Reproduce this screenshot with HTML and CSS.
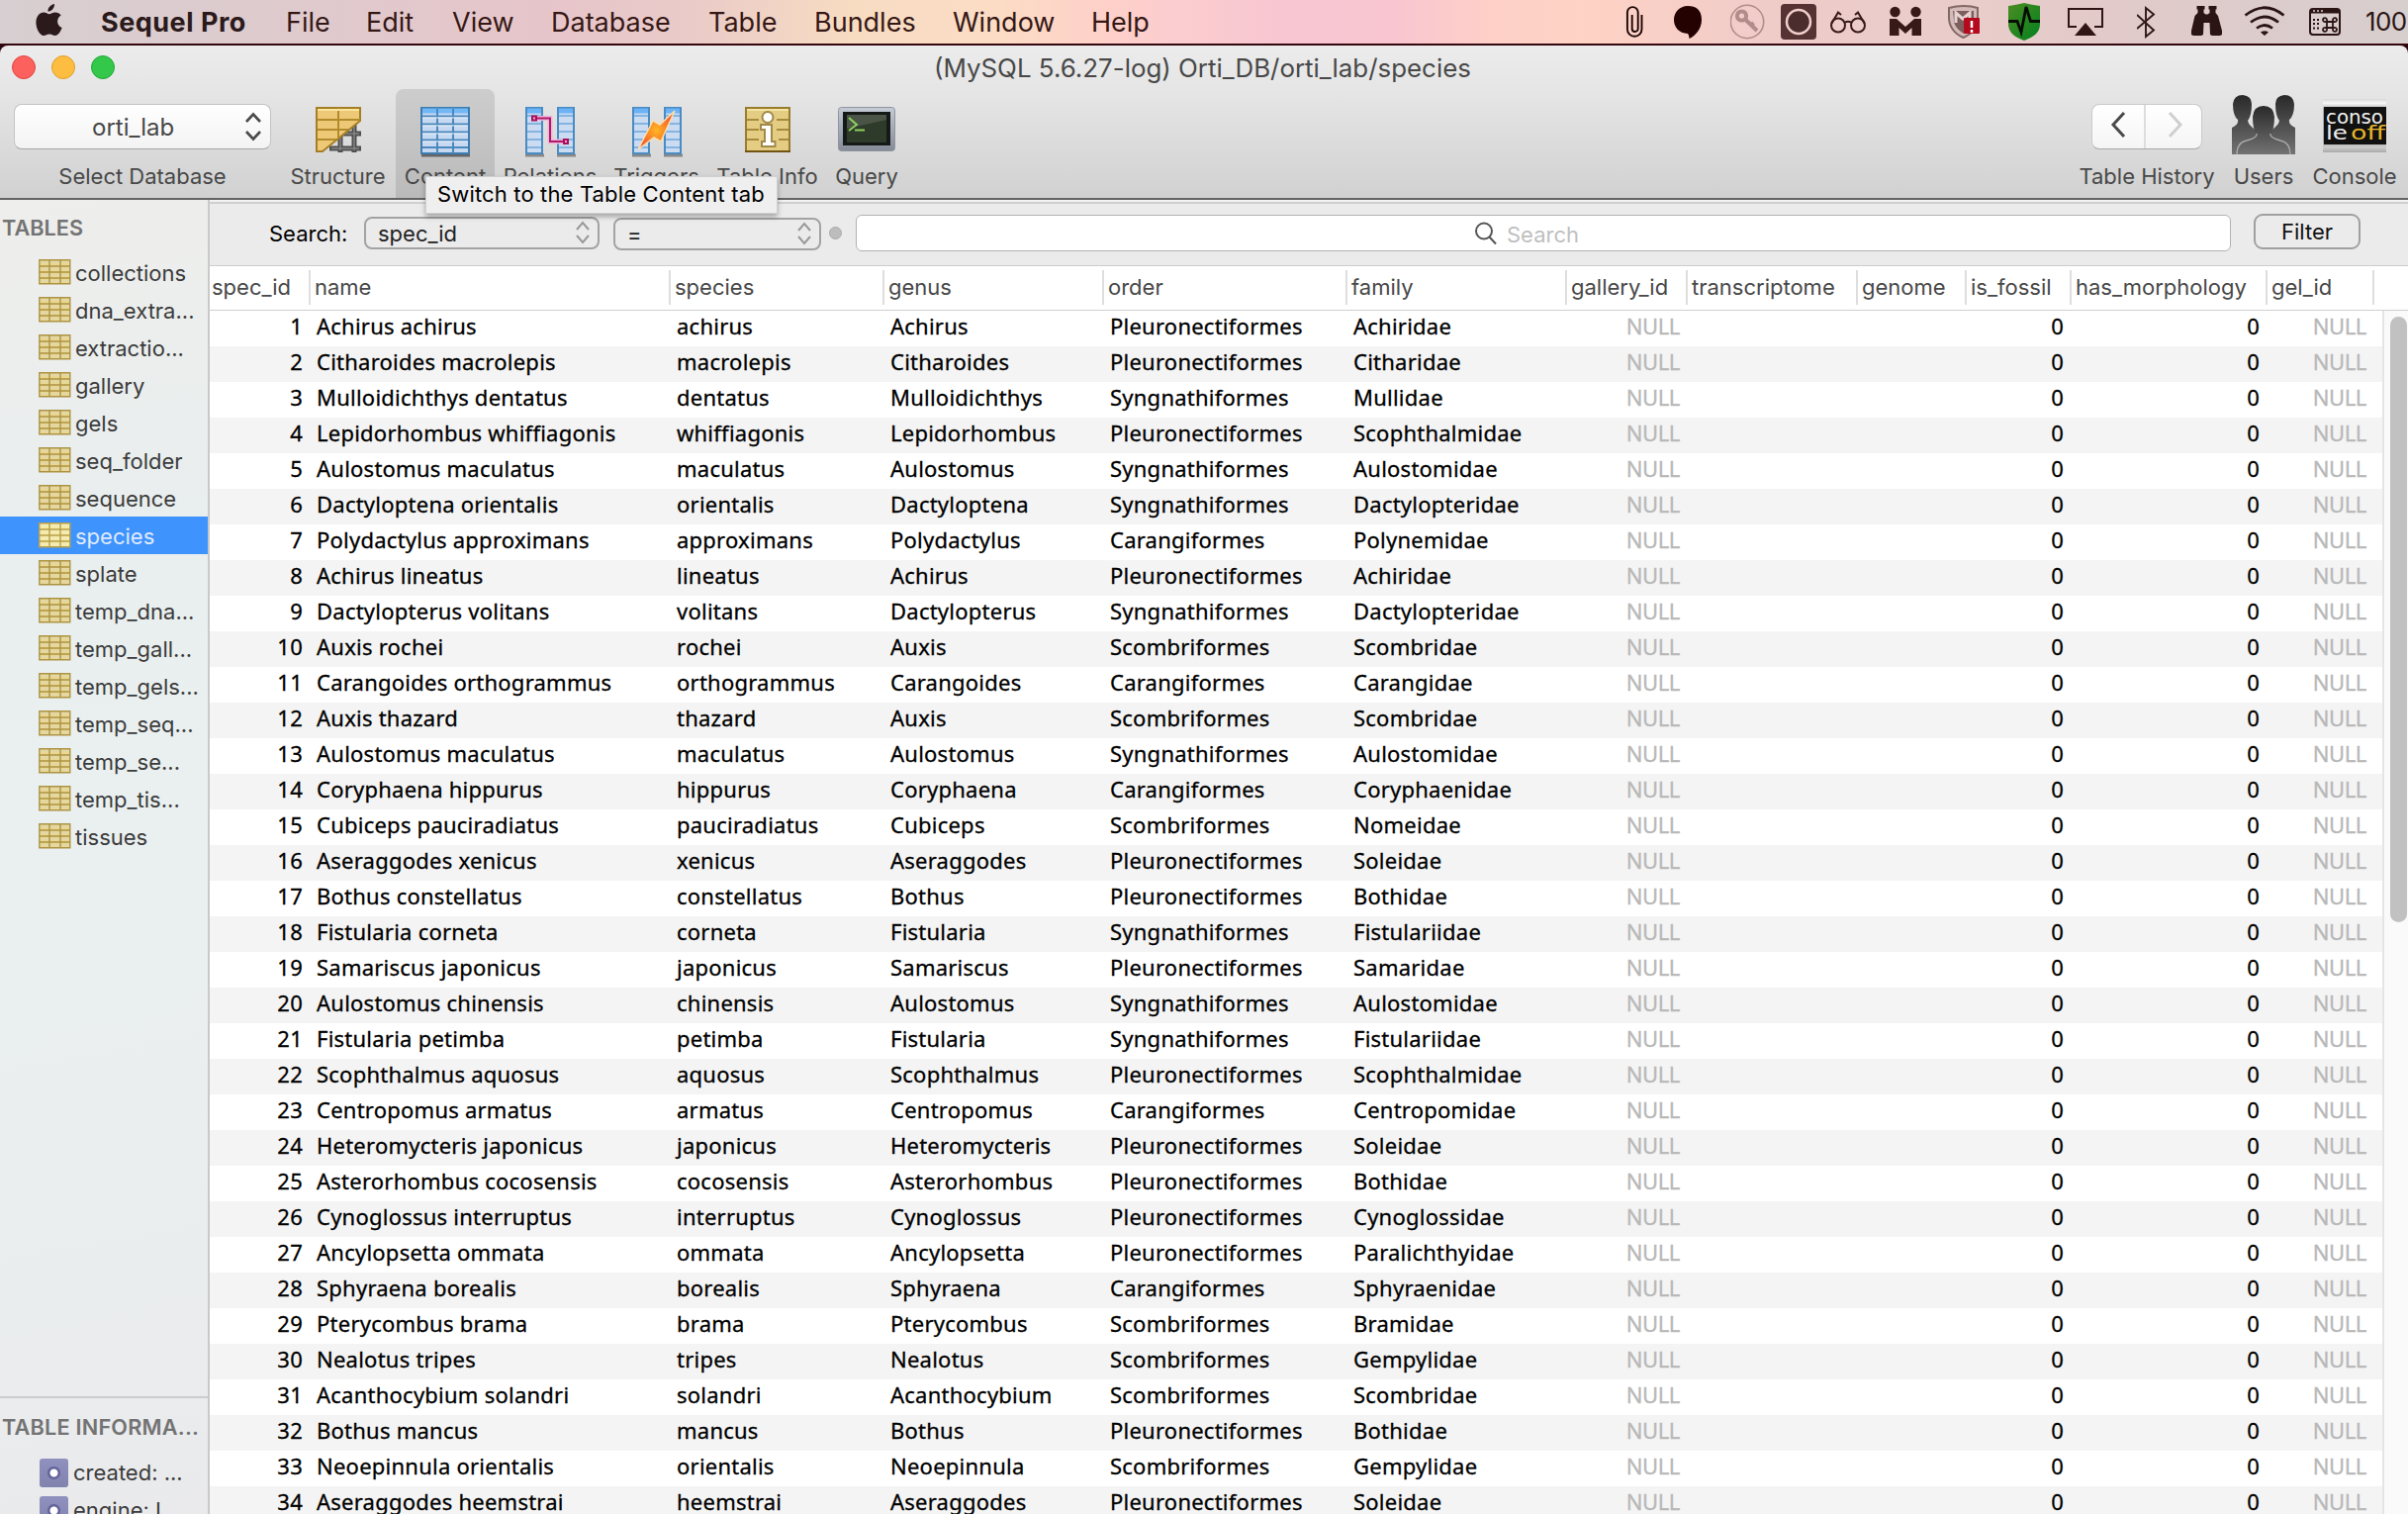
FILE: index.html
```html
<!DOCTYPE html>
<html lang="en">
<head>
<meta charset="utf-8">
<title>Sequel Pro</title>
<link rel="stylesheet" href="styles.css">
</head>
<body>
<header class="menubar">
  <svg class="apple" width="28" height="34" viewBox="0 0 28 34"><path d="M19 0c.4 3.6-2.800 7.600-6.500 7.600C12 4.200 15.300.600 19 0zM13.600 10.300c1.400 0 3.200-1.900 6.200-1.900 2.500 0 4.600 1.200 5.900 3.100-5.200 3.200-4.500 10.300.9 12.500C25.400 27.700 22.600 32 19.700 32c-2.300 0-3-1.400-5.700-1.400S10.300 32 8.200 32C4.300 32 .400 25 .400 18.800c0-6.400 3.800-10.200 7.700-10.200 2.500 0 4.200 1.700 5.500 1.700z"/></svg>
  <nav class="menus">
    <b>Sequel Pro</b><span>File</span><span>Edit</span><span>View</span><span>Database</span><span>Table</span><span>Bundles</span><span>Window</span><span>Help</span>
  </nav>
  <div class="tray">
    <svg width="20" height="44" viewBox="0 0 20 44" fill="none" stroke="#1c0605" stroke-width="1.900"><path d="M16.500 15v14.500a7.300 7.300 0 0 1-14.600 0V12.500a5.400 5.400 0 0 1 10.800 0V29a3 3 0 0 1-6 0V15"/></svg>
    <svg width="30" height="44" viewBox="0 0 30 44"><path fill="#250202" d="M14 6C5.500 6 0 12.500 0 20s5 13.500 14 14c1 1 1.500 3 1.400 5C21 36.500 28 30 28 20S22.500 6 14 6z"/></svg>
    <svg width="36" height="44" viewBox="0 0 36 44" fill="none" stroke="#b08c8a"><circle cx="17" cy="22" r="16.700" stroke-width="1.600"/><circle cx="11.500" cy="16" r="4.600" stroke-width="4"/><path stroke-width="4" d="M15 19.500L27 31M20.500 26l3-3"/></svg>
    <svg width="36" height="44" viewBox="0 0 36 44"><rect y="4" width="36" height="36" rx="4" fill="#553334"/><circle cx="18" cy="22" r="12" fill="#4b2d2e" stroke="#f0cecb" stroke-width="2.500"/></svg>
    <svg width="36" height="44" viewBox="0 0 36 44" fill="none" stroke="#3a1a19" stroke-width="2"><circle cx="8" cy="25.500" r="7"/><circle cx="28" cy="25.500" r="7"/><path d="M14.500 23q3.500-2.500 7 0M1.200 24L8 12.500l3 2.500M34.800 24L28 12.500 25 15"/></svg>
    <svg width="32" height="44" viewBox="0 0 32 44" fill="#371918"><circle cx="5.500" cy="12" r="5.200"/><circle cx="26.500" cy="12" r="5.200"/><path d="M0 36V19h7l9 8 9-8h7v17h-9.500v-8L16 34l-6.500-6v8z"/></svg>
    <svg width="34" height="44" viewBox="0 0 34 44"><path d="M1 8q7-2 15-2t14 2v11c0 9-6 15-14.500 19C6 34 1 26 1 18z" fill="#d4bab9" stroke="#836866" stroke-width="2"/><path d="M5 11h21v11c-1 6-5 9-10 12-6-4-10-8-10-14z" fill="#7d5f5e"/><path d="M8 23V13l7 6 7-6v8" fill="none" stroke="#e7d4d2" stroke-width="3"/><rect x="16" y="18" width="16" height="16" rx="1" fill="#b5091d"/><path d="M24 21v7m0 2v3" stroke="#fff" stroke-width="2.500"/></svg>
    <svg width="32" height="44" viewBox="0 0 32 44"><defs><linearGradient id="green" x2="1" y2="1"><stop stop-color="#4c8c22"/><stop offset="1" stop-color="#02811f"/></linearGradient></defs><path d="M0 6q8-1 16-3 8 2 16 3v18c0 9-6 13-16 17C6 37 0 33 0 24z" fill="url(#green)"/><path d="M0 21.500h9l4 11L18 7l4.500 14.500H32" fill="none" stroke="#080d05" stroke-width="2.800"/></svg>
    <svg width="36" height="44" viewBox="0 0 36 44"><path d="M9 27H1V9h34v18h-8" fill="none" stroke="#301716" stroke-width="2"/><path d="M18 23l11 13H7z" fill="#301716"/></svg>
    <svg width="20" height="44" viewBox="0 0 20 44"><path d="M0 15l17 15.500L9 37V8l8 6.500L0 29" fill="none" stroke="#301716" stroke-width="1.900"/></svg>
    <svg width="31" height="44" viewBox="0 0 31 44" fill="#2b1514"><path d="M5.500 6h8v3.500h-1V13l2 1.500h2l2-1.500V9.500h-1V6h8v3.500h-1V13l2.500 3L31 31v4l-2 1h-8l-2-1-.5-12h-6L12 35l-2 1H2l-2-1v-4l3.500-15L6.500 13V9.500h-1z"/></svg>
    <svg width="42" height="44" viewBox="0 0 42 44" fill="none" stroke="#2b1514" stroke-width="2.700"><path d="M1.500 15.500q19.500-15.500 39 0M7 22.500q14-11 28 0M13 28.500q8-6 16 0"/><path d="M21 36l-4-3.500q4-2.500 8 0z" fill="#2b1514" stroke="none"/></svg>
    <svg width="32" height="44" viewBox="0 0 32 44" fill="none" stroke="#2b1514" stroke-width="2"><rect x="1" y="9" width="30" height="26" rx="3"/><path d="M1 11.500h30" stroke-width="4"/><path d="M4 20h2m2 0h2M4 24h2m2 0h2M4 28.500h2m2 0h2"/><path stroke-width="1.800" d="M18 22h6v6h-6zM18 22h-1.500a2 2 0 1 1 1.500-2zM24 22h1.500a2 2 0 1 0-1.500-2zM18 28h-1.500a2 2 0 1 0 1.500 2zM24 28h1.500a2 2 0 1 1-1.500 2z"/><path d="M4 11h2m2 0h2m2 0h2" stroke="#dccaca" stroke-width="1.500"/></svg>
    <span class="battery">100%</span>
  </div>
</header>
<main class="window">
  <div class="chrome">
    <div class="titlebar">
      <div class="lights"><i class="red"></i><i class="yellow"></i><i class="green"></i></div>
      <h1>(MySQL 5.6.27-log) Orti_DB/orti_lab/species</h1>
    </div>
    <div class="toolbar">
      <div class="tool database"><div class="art"><div class="dbselect"><span>orti_lab</span><svg width="18" height="30" viewBox="0 0 18 30" fill="none" stroke="#4a4a4a" stroke-width="2.600"><path d="M2 10l7-7.500 7 7.500M2 20l7 7.500 7-7.500"/></svg></div></div><label>Select Database</label></div>
      <div class="tool structure"><div class="art"><svg width="46" height="52" viewBox="0 0 46 52"><g stroke="#4f4f4f" stroke-width="5"><path d="M14 42h32M26 27h20M25 46V26M39 46V14"/></g><g stroke="#858585" stroke-width="1.500"><path d="M16 42h28M28 27h16M25 44V30M39 44V20"/></g><path d="M1 1h44v13L7 45H1z" fill="#edc977" stroke="#a67f25" stroke-width="2"/><path d="M2 13h43M2 23h31M2 33h19M23 1v31" stroke="#b38a2b" stroke-width="2"/><path d="M2 3h42" stroke="#f8e69e" stroke-width="2"/></svg></div><label>Structure</label></div>
      <div class="tool content active"><div class="art"><svg width="52" height="52" viewBox="0 0 52 52"><path d="M2 49h49" stroke="#666" stroke-width="3"/><path d="M2 1h48v46H2z" fill="#c7d9f1" stroke="#3c7db1" stroke-width="2"/><path d="M3 4h46" stroke="#72b7f6" stroke-width="5"/><path d="M3 9.500h46M3 17.500h46M3 25.500h46M3 33.500h46M3 41h46M18 2v45M34 2v45" stroke="#4b88bd" stroke-width="2"/><path d="M3 11h46M3 19h46M3 27h46M3 35h46" stroke="#edf3fb"/></svg></div><label>Content</label></div>
      <div class="tool relations"><div class="art"><svg width="52" height="52" viewBox="0 0 52 52"><path d="M1 49h19M33 49h19" stroke="#888" stroke-width="3"/><path d="M2 1h16v46H2zM34 1h16v46H34z" fill="#cbdbf1" stroke="#498bc2" stroke-width="2"/><path d="M3 4h14M35 4h14" stroke="#6bb2f7" stroke-width="5"/><path d="M3 9h14M3 17h14M3 25h14M3 33h14M3 41h14M35 9h14M35 17h14M35 25h14M35 33h14M35 41h14" stroke="#84b4df" stroke-width="2"/><path d="M10 11.500h16V35h14" fill="none" stroke="#efb6da" stroke-width="5"/><path d="M10 11.500h16V35h14" fill="none" stroke="#b0196a" stroke-width="2"/><path d="M8 9.500h4v4H8zM40 33h4v4h-4z" fill="#f3a8d2" stroke="#a80f5d" stroke-width="2"/></svg></div><label>Relations</label></div>
      <div class="tool triggers"><div class="art"><svg width="52" height="52" viewBox="0 0 52 52"><path d="M1 49h19M33 49h19" stroke="#888" stroke-width="3"/><path d="M2 1h16v46H2zM34 1h16v46H34z" fill="#cbdbf1" stroke="#498bc2" stroke-width="2"/><path d="M3 4h14M35 4h14" stroke="#6bb2f7" stroke-width="5"/><path d="M3 9h14M3 17h14M3 25h14M3 33h14M3 41h14M35 9h14M35 17h14M35 25h14M35 33h14M35 41h14" stroke="#84b4df" stroke-width="2"/><defs><radialGradient id="bolt"><stop stop-color="#ffb723"/><stop offset="1" stop-color="#f8562b"/></radialGradient></defs><path d="M44 4L30 35l-7-4L7 43 22 14l7 4z" fill="url(#bolt)" stroke="#f8dfad" stroke-width="1.500"/></svg></div><label>Triggers</label></div>
      <div class="tool info"><div class="art"><svg width="46" height="52" viewBox="0 0 46 52"><path d="M1 1h44v44H1z" fill="#e5cc83" stroke="#987d2e" stroke-width="2"/><path d="M0 45h46" stroke="#705512" stroke-width="2"/><path d="M2 3h42" stroke="#f4e5a5" stroke-width="2"/><path d="M2 13h12M32 13h12M2 23h12M32 23h12M2 33h12M34 33h10" stroke="#a68b3c" stroke-width="2"/><g fill="#fff" stroke="#a18a49" stroke-width="2"><circle cx="23" cy="10.500" r="5.500"/><path d="M16 18h11v17h3.500v5H17v-5h3V23h-4z"/></g></svg></div><label>Table Info</label></div>
      <div class="tool query"><div class="art"><svg width="58" height="52" viewBox="0 0 58 52"><defs><linearGradient id="frame" x2="0" y2="1"><stop stop-color="#c5cbd5"/><stop offset="1" stop-color="#858b97"/></linearGradient></defs><rect x=".5" y=".5" width="57" height="44" rx="3" fill="url(#frame)" stroke="#8f949e"/><path d="M5 5h48v34H5z" fill="#151a17"/><path d="M9 8h40v28H9z" fill="#2f3b2a"/><path d="M9 8h40v5L9 22z" fill="#4b5547"/><path d="M11 11l8 7-8 6M17 23.500h10" fill="none" stroke="#8ed05c" stroke-width="2"/></svg></div><label>Query</label></div>
      <div class="tool history"><div class="art"><div class="navpair"><span><svg width="16" height="28" viewBox="0 0 16 28" fill="none" stroke="#4a4a4a" stroke-width="3"><path d="M14 2L3 14l11 12"/></svg></span><span><svg width="16" height="28" viewBox="0 0 16 28" fill="none" stroke="#cfcfcf" stroke-width="3"><path d="M2 2l11 12L2 26"/></svg></span></div></div><label>Table History</label></div>
      <div class="tool users"><div class="art"><svg width="64" height="60" viewBox="0 0 64 60"><defs><linearGradient id="person" x2="0" y2="1"><stop stop-color="#292929"/><stop offset="1" stop-color="#737373"/></linearGradient></defs><g fill="url(#person)"><path d="M0 60V33q7-3 6-8-5-4-5-16Q2 0 11 0q9 1 9 9 0 12-4 17 1 5 9 10v24zM64 60V33q-7-3-6-8 5-4 5-16Q62 0 53 0q-9 1-9 9 0 12 4 17-1 5-9 10v24z"/></g><path d="M5 60q0-12 10-14 10-3 10-6-4-5-4-18 1-11 11-11t11 11q0 13-4 18 0 3 10 6 10 2 10 14z" fill="url(#person)"/><path d="M5 60q0-12 10-14 11-3 10-7M59 60q0-12-10-14-11-3-10-7" fill="none" stroke="#aaa" stroke-width="1.300"/></svg></div><label>Users</label></div>
      <div class="tool console"><div class="art"><svg width="64" height="54" viewBox="0 0 64 54"><defs><linearGradient id="shine" x2="0" y2="1"><stop stop-color="#d8d8d8"/><stop offset=".08" stop-color="#f7f7f7"/><stop offset=".2" stop-color="#aaa"/><stop offset=".8" stop-color="#aaa"/><stop offset=".9" stop-color="#ccc"/><stop offset="1" stop-color="#aaa"/></linearGradient></defs><path d="M0 0h64v54H0z" fill="url(#shine)"/><path d="M1 8h63v38H1z" fill="#111"/><text x="3" y="25" fill="#f0f0f0" textLength="58" lengthAdjust="spacingAndGlyphs">conso</text><text x="3" y="41" fill="#eee" textLength="22" lengthAdjust="spacingAndGlyphs">le</text><text x="28" y="41" fill="#e7b52c" textLength="35" lengthAdjust="spacingAndGlyphs">off</text></svg></div><label>Console</label></div>
    </div>
    <div class="tooltip">Switch to the Table Content tab</div>
  </div>
  <div class="body">
    <aside class="sidebar">
      <h2>TABLES</h2>
      <ul class="tables" id="tables"></ul>
      <section class="details">
        <h2>TABLE INFORMA...</h2>
        <p><i class="gear"></i>created: ...</p>
        <p><i class="gear"></i>engine: I...</p>
      </section>
    </aside>
    <section class="pane">
      <div class="filterbar">
        <span class="searchlabel">Search:</span>
        <div class="popup field">spec_id<svg width="14" height="24" viewBox="0 0 14 24" fill="none" stroke="#999" stroke-width="2"><path d="M1 9l6-7 6 7M1 15l6 7 6-7"/></svg></div>
        <div class="popup operator">=<svg width="14" height="24" viewBox="0 0 14 24" fill="none" stroke="#999" stroke-width="2"><path d="M1 9l6-7 6 7M1 15l6 7 6-7"/></svg></div>
        <i class="dot"></i>
        <div class="searchfield"><svg width="24" height="24" viewBox="0 0 24 24" fill="none" stroke="#555" stroke-width="2"><circle cx="10" cy="9.500" r="8"/><path d="M15.500 15.500L22 22.500"/></svg><span>Search</span></div>
        <button class="filter">Filter</button>
      </div>
      <div class="row head"><span>spec_id</span><span>name</span><span>species</span><span>genus</span><span>order</span><span>family</span><span>gallery_id</span><span>transcriptome</span><span>genome</span><span>is_fossil</span><span>has_morphology</span><span>gel_id</span></div>
      <div class="scroller">
        <div class="rows" id="rows"></div>
        <div class="track"><div class="thumb"></div></div>
      </div>
    </section>
  </div>
</main>
<script src="data.js"></script>
</body>
</html>
```
FILE: styles.css
```css
* { box-sizing: border-box; }
body { margin: 0; width: 2434px; height: 1530px; overflow: hidden; background: #2a0710; font-family: Inter, "Liberation Sans", sans-serif; font-size: 22px; color: #000; }
svg { display: block; flex: none; }
h1, h2, p, ul { margin: 0; padding: 0; font: inherit; list-style: none; }

.menubar { height: 46px; display: flex; border-bottom: 2px solid #34060d; color: #351815; font-size: 27px; line-height: 45px; white-space: nowrap; overflow: hidden;
  background: linear-gradient(90deg, #d7cfd1 0, #dfcacd 300px, #e7c5ca 570px, #eacbc8 700px, #f7dcc2 860px, #fcdcc5 1010px, #fed0c9 1120px, #fccdcf 1180px, #f7c6d2 1300px, #f8c5d0 1410px, #fdcfc8 1500px, #ffd3c5 1600px, #f3cdc8 1740px, #edcbc9 1830px, #e9cdcb 2000px, #e1cac9 2140px, #d7cece 2434px); }
.apple { margin: 4px 38px 0 36px; fill: #2b1a1b; }
.menus { display: grid; grid-template-columns: 187px 81px 87px 100px 159px 107px 140px 140px 540px; }
.menus b { font-weight: 700; letter-spacing: .5px; color: #2b1a1b; }
.tray { display: grid; grid-template-columns: 49px 57px 51px 50px 60px 59px 61px 60px 70px 55px 53px 66px 57px 60px; }
.battery { font-size: 26px; color: #2b1514; letter-spacing: -.6px; line-height: 43px; }

.window { height: 1484px; display: flex; flex-direction: column; border-radius: 8px 8px 0 0; overflow: hidden; }
.chrome { position: relative; height: 156px; flex: none; background: linear-gradient(#ececec, #e4e4e4 35%, #d1d1d1); border-bottom: 2px solid #656365; }
.titlebar { height: 44px; display: grid; grid-template-columns: 944px 1fr; }
.titlebar h1 { font-size: 25.9px; line-height: 46px; height: 44px; color: #484848; }
.lights { display: flex; gap: 16px; padding: 10px 12px; }
.lights i { width: 24px; height: 24px; border-radius: 50%; border: 1px solid #e2443f; background: #fc615d; }
.lights .yellow { background: #fdbd41; border-color: #dfa023; }
.lights .green { background: #34c84a; border-color: #22a834; }
.toolbar { display: flex; height: 110px; color: #484848; }
.tool { display: flex; flex-direction: column; align-items: center; flex: none; white-space: nowrap; }
.art { height: 74px; display: flex; align-items: flex-start; padding-top: 18px; }
.tool label { line-height: 28px; }
.database { width: 260px; margin: 0 9px 0 14px; }
.database .art, .history .art { padding-top: 15px; }
.dbselect { width: 260px; height: 46px; border-radius: 8px; border: 1px solid #c4c4c4; border-bottom-color: #a5a5a5; background: linear-gradient(#fff, #f3f3f3); display: flex; align-items: center; justify-content: space-between; padding: 0 8px 0 78px; font-size: 24px; }
.structure { width: 117px; }
.content { width: 100px; }
.active { background: linear-gradient(#cdcdcd, #bababa); border-radius: 8px 8px 0 0; }
.relations { width: 112px; }
.triggers { width: 103px; }
.info { width: 121px; }
.query { width: 80px; }
.history { width: 136px; margin-left: 1186px; }
.users { width: 100px; }
.users .art { padding-top: 6px; }
.console { width: 84px; }
.console .art { padding-top: 10px; }
.console text { font: 500 20px "DejaVu Sans", sans-serif; stroke: currentColor; stroke-width: 0; }
.navpair { width: 112px; height: 46px; display: flex; border: 1px solid #cacaca; border-bottom-color: #a8a8a8; border-radius: 8px; background: linear-gradient(#fff, #f5f5f5); }
.navpair span { flex: 1; display: flex; align-items: center; justify-content: center; padding-bottom: 4px; }
.navpair span + span { border-left: 2px solid #ddd; padding-left: 4px; }
.tooltip { position: absolute; left: 430px; top: 132px; width: 356px; height: 38px; z-index: 2; background: #efefef; border: 1px solid #d0d0d0; box-shadow: 0 3px 5px rgba(0,0,0,.3); line-height: 35px; padding-left: 11px; letter-spacing: .15px; white-space: nowrap; }

.body { flex: 1; min-height: 0; display: flex; }
.sidebar { width: 212px; flex: none; border-right: 2px solid #c9c9c9; background: linear-gradient(170deg, #eeeeec 0, #e9eeee 25%, #eaf0f0 45%, #eaeeef 75%, #eaeaec 100%); color: #3b3b3b; display: flex; flex-direction: column; white-space: nowrap; overflow: hidden; }
.sidebar h2 { font-weight: 600; font-size: 21.700px; color: #737373; padding-left: 2px; line-height: 57px; height: 54px; letter-spacing: 0; }
.tables { flex: 1; }
.tables li { height: 38px; padding-left: 39px; display: flex; gap: 4px; align-items: center; }
.tables span { line-height: 36px; padding-top: 2px; }
.tables .selected { background: #3f93fc; color: #dfeaff; }
.grid { opacity: .95; }
.selected .grid { filter: brightness(1.120); }
.details { height: 119px; border-top: 2px solid #cbcdce; overflow: hidden; flex: none; }
.sidebar .details h2 { height: 56px; line-height: 59px; letter-spacing: .2px; }
.details p { height: 38px; line-height: 38px; display: flex; align-items: center; gap: 5px; padding-left: 40px; }
.gear { width: 29px; height: 29px; border-radius: 3px; background: radial-gradient(circle at 50% 50%, #fff 0 3.500px, #63649b 4.500px 6px, transparent 7px), linear-gradient(#9091be, #8182ae); }

.pane { flex: 1; min-width: 0; display: flex; flex-direction: column; background: #fff; }
.filterbar { height: 67px; flex: none; display: flex; align-items: flex-start; background: linear-gradient(#f3f3f3 0 2px, #cfcfcf 2px 4px, #ebebeb 4px); border-bottom: 1px solid #ccc; }
.searchlabel { width: 98px; margin-left: 58px; padding-left: 2px; line-height: 69px; height: 66px; }
.popup { height: 33px; margin-top: 17px; border: 2px solid #a3a3a3; border-radius: 8px; display: flex; align-items: center; justify-content: space-between; padding: 0 8px 0 12px; color: #222; line-height: 28px; }
.field { width: 238px; }
.operator { width: 210px; margin-left: 14px; margin-top: 18px; }
.operator svg, .field svg { margin-top: -1px; }
.dot { width: 13px; height: 13px; border-radius: 50%; background: #bdbdbd; border: 1px solid #aaa; margin: 27px 14px 0 8px; }
.searchfield { width: 1390px; height: 37px; margin-top: 15px; border: 1px solid #b2b2b2; border-radius: 6px; background: #fff; display: flex; align-items: center; justify-content: center; gap: 9px; color: #bfbfbf; padding-right: 34px; }
.searchfield span { padding-top: 2px; }
.filter { width: 108px; height: 36px; margin: 14px 0 0 23px; padding: 0 0 1px; font: inherit; color: #111; border: 2px solid #a0a0a0; border-radius: 9px; background: #ebebeb; }
.row { display: grid; width: 2196px; grid-template-columns: 102px 364px 216px 222px 246px 222px 122px 172px 110px 106px 198px 108px; height: 36px; white-space: nowrap; }
.head { height: 45px; width: 2222px; flex: none; padding: 4px 0 5px; border-bottom: 1px solid #cfcfcf; color: #484848; }
.head span { border-right: 2px solid #dedede; padding-left: 4px; line-height: 35px; height: 35px; }
.head span:first-child { padding-left: 2px; }
.scroller { flex: 1; min-height: 0; display: flex; }
.rows { width: 2196px; overflow: hidden; font-family: "Noto Sans", "Open Sans", sans-serif; letter-spacing: .24px; -webkit-text-stroke: .3px; }
.rows .row:nth-child(even) { background: #f4f4f4; }
.rows span { line-height: 31px; padding: 0 8px 0 6px; }
.rows .number { text-align: right; }
.rows .null { text-align: right; color: #b8b8b8; letter-spacing: -.4px; }
.track { flex: 1; border-left: 2px solid #e5e5e5; background: #fafafa; padding: 6px 1px 0 6px; }
.thumb { height: 612px; border-radius: 9px; background: #c1c1c1; }
```
FILE: data.js
```
const tables = ["collections", "dna_extra...", "extractio...", "gallery", "gels", "seq_folder", "sequence", "species", "splate", "temp_dna...", "temp_gall...", "temp_gels...", "temp_seq...", "temp_se...", "temp_tis...", "tissues"];
const gridIcon = '<svg class="grid" width="33" height="26" viewBox="0 0 33 26"><path d="M.8.800h31v24H.800z" fill="#e9d68c"/><path d="M1 3h31M1 9.500h31M1 16h31M1 22h31" stroke="#e3d6a3" stroke-width="2"/><path d="M.800.800h31v24H.800zM1 7h31M1 13h31M1 19h31M11 1v24M22 1v24" fill="none" stroke="#a98f3c" stroke-width="1.400"/></svg>';
document.getElementById("tables").innerHTML = tables.map(t => `<li${t === "species" ? ' class="selected"' : ""}>${gridIcon}<span>${t}</span></li>`).join("");

const P = "Pleuronectiformes", S = "Syngnathiformes", C = "Carangiformes", B = "Scombriformes";
const fish = [
  ["Achirus achirus", P, "Achiridae"],
  ["Citharoides macrolepis", P, "Citharidae"],
  ["Mulloidichthys dentatus", S, "Mullidae"],
  ["Lepidorhombus whiffiagonis", P, "Scophthalmidae"],
  ["Aulostomus maculatus", S, "Aulostomidae"],
  ["Dactyloptena orientalis", S, "Dactylopteridae"],
  ["Polydactylus approximans", C, "Polynemidae"],
  ["Achirus lineatus", P, "Achiridae"],
  ["Dactylopterus volitans", S, "Dactylopteridae"],
  ["Auxis rochei", B, "Scombridae"],
  ["Carangoides orthogrammus", C, "Carangidae"],
  ["Auxis thazard", B, "Scombridae"],
  ["Aulostomus maculatus", S, "Aulostomidae"],
  ["Coryphaena hippurus", C, "Coryphaenidae"],
  ["Cubiceps pauciradiatus", B, "Nomeidae"],
  ["Aseraggodes xenicus", P, "Soleidae"],
  ["Bothus constellatus", P, "Bothidae"],
  ["Fistularia corneta", S, "Fistulariidae"],
  ["Samariscus japonicus", P, "Samaridae"],
  ["Aulostomus chinensis", S, "Aulostomidae"],
  ["Fistularia petimba", S, "Fistulariidae"],
  ["Scophthalmus aquosus", P, "Scophthalmidae"],
  ["Centropomus armatus", C, "Centropomidae"],
  ["Heteromycteris japonicus", P, "Soleidae"],
  ["Asterorhombus cocosensis", P, "Bothidae"],
  ["Cynoglossus interruptus", P, "Cynoglossidae"],
  ["Ancylopsetta ommata", P, "Paralichthyidae"],
  ["Sphyraena borealis", C, "Sphyraenidae"],
  ["Pterycombus brama", B, "Bramidae"],
  ["Nealotus tripes", B, "Gempylidae"],
  ["Acanthocybium solandri", B, "Scombridae"],
  ["Bothus mancus", P, "Bothidae"],
  ["Neoepinnula orientalis", B, "Gempylidae"],
  ["Aseraggodes heemstrai", P, "Soleidae"]
];
document.getElementById("rows").innerHTML = fish.map(([name, order, family], i) => {
  const [genus, species] = name.split(" ");
  return `<div class="row"><span class="number">${i + 1}</span><span>${name}</span><span>${species}</span><span>${genus}</span><span>${order}</span><span>${family}</span><span class="null">NULL</span><span></span><span></span><span class="number">0</span><span class="number">0</span><span class="null">NULL</span></div>`;
}).join("");
```
